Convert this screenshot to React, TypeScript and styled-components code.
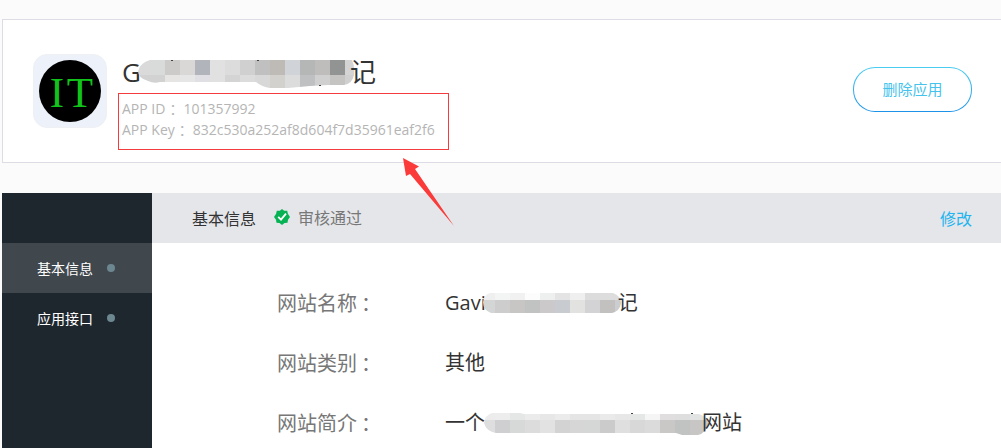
import React from "react";
import styled, { createGlobalStyle } from "styled-components";

const GlobalStyle = createGlobalStyle`
  * { box-sizing: border-box; }
  body {
    margin: 0;
    background: #fbfbfb;
    color: #333;
    font-family: "Open Sans", "Noto Sans CJK SC", sans-serif;
    font-size: 14px;
  }
`;

const Page = styled.div`
  min-height: 100vh;
  padding: 19px 0 0 2px;
  display: flex;
  flex-direction: column;
  gap: 30px;
  overflow: hidden;
`;

const AppCard = styled.header`
  position: relative;
  display: flex;
  align-items: flex-start;
  min-height: 144px;
  padding: 34px 29px 12px 30px;
  background: #fff;
  border: 1px solid #dcdde4;
  border-right: 0;
`;

const Avatar = styled.div`
  flex: none;
  width: 74px;
  height: 74px;
  border-radius: 14px;
  background: #edf2fa;
  border: 1px solid #eef0f4;
  svg { display: block; }
`;

const AppInfo = styled.div`
  flex: 1;
  min-width: 0;
  margin-left: 11px;
`;

const AppName = styled.h1`
  display: flex;
  align-items: center;
  margin: 0;
  padding: 0 0 2px 4px;
  height: 39px;
  font-size: 26px;
  line-height: 37px;
  font-weight: 400;
`;

const Mosaic = styled.svg<{ $before: number; $after: number; $top: number }>`
  flex: none;
  overflow: visible;
  margin: ${(p) => p.$top}px ${(p) => p.$after}px 0 ${(p) => p.$before}px;
`;

const Credentials = styled.dl`
  width: 331px;
  height: 57px;
  margin: 0;
  padding: 4px 3px;
  border: 1px solid #f43c3e;
  color: #b5b5b5;
  font-size: 14px;
  line-height: 21px;
  white-space: nowrap;
`;

const Credential = styled.div`
  display: flex;
  height: 21px;
  dt, dd { margin: 0; }
`;

const Colon = styled.span`
  padding-left: 4px;
  font-family: "Noto Sans CJK SC", sans-serif;
`;

const DeleteButton = styled.button`
  flex: none;
  width: 119px;
  height: 45px;
  margin-top: 13px;
  padding: 0 0 2px;
  border: 1px solid transparent;
  border-radius: 22px;
  background:
    linear-gradient(#fff, #fff) padding-box,
    linear-gradient(#4acdf0, #1c92e8) border-box;
  color: #45c3ec;
  font: inherit;
  font-size: 15px;
  cursor: pointer;
`;

const Arrow = styled.svg`
  position: absolute;
  left: 400px;
  top: 137px;
  z-index: 1;
`;

const Main = styled.div`
  flex: 1;
  display: flex;
`;

const Sidebar = styled.nav`
  flex: none;
  width: 150px;
  padding-top: 50px;
  background: #1f272e;
`;

const NavItem = styled.a<{ $active?: boolean }>`
  display: flex;
  align-items: center;
  gap: 14px;
  height: 50px;
  padding-left: 35px;
  background: ${(p) => (p.$active ? "#41484d" : "transparent")};
  color: #fff;
  text-decoration: none;

  &::after {
    content: "";
    width: 8px;
    height: 8px;
    border-radius: 50%;
    background: #6d8790;
  }
`;

const Panel = styled.main`
  flex: 1;
  min-width: 0;
  background: #fff;
`;

const PanelHeader = styled.div`
  display: flex;
  align-items: center;
  height: 50px;
  padding: 0 29px 0 40px;
  background: #e5e6ea;
  font-size: 16px;
`;

const PanelTitle = styled.h2`
  margin: 0;
  font-size: 16px;
  font-weight: 400;
`;

const Status = styled.span`
  display: flex;
  align-items: center;
  gap: 8px;
  margin-left: 18px;
  padding-bottom: 2px;
  color: #777;
`;

const EditLink = styled.a`
  margin-left: auto;
  color: #22b4ee;
  text-decoration: none;
`;

const Details = styled.dl`
  margin: 0;
  padding: 30px 0 0 125px;
  font-size: 20px;
  line-height: 60px;
`;

const Detail = styled.div`
  display: flex;
  height: 60px;
`;

const Term = styled.dt`
  width: 168px;
  color: #777;
`;

const Value = styled.dd`
  display: flex;
  align-items: center;
  margin: 0;
`;

type MosaicProps = {
  id: string;
  width: number;
  height: number;
  split: number;
  first: number;
  outline: string;
  top: string[];
  bottom: string[];
  specks?: [number, number][];
  before?: number;
  after?: number;
  drop?: number;
};

/* Two rows of 15px blocks, the first one cut to `first` pixels. */
const MosaicBar = ({ id, width, height, split, first, outline, top, bottom, specks = [], before = 0, after = 0, drop = 0 }: MosaicProps) => {
  const x = (i: number) => (i === 0 ? 0 : first + (i - 1) * 15);
  const w = (i: number) => (i === 0 ? first : 15);
  return (
    <Mosaic width={width} height={height} $before={before} $after={after} $top={drop} aria-hidden="true">
      <clipPath id={id}>
        <path d={outline} />
      </clipPath>
      <g clipPath={`url(#${id})`} shapeRendering="crispEdges">
        {top.map((c, i) => (
          <rect key={`t${i}`} x={x(i)} y={0} width={w(i)} height={split} fill={c} />
        ))}
        {bottom.map((c, i) => (
          <rect key={`b${i}`} x={x(i)} y={split} width={w(i)} height={height - split} fill={c} />
        ))}
      </g>
      {specks.map(([sx, sy]) => (
        <rect key={`${sx}-${sy}`} x={sx} y={sy} width={2} height={1} fill="#444" />
      ))}
    </Mosaic>
  );
};

export default function App() {
  return (
    <>
      <GlobalStyle />
      <Page>
        <AppCard>
          <Avatar>
            <svg width="72" height="72" viewBox="0 0 72 72">
              <circle cx="36" cy="36" r="31" fill="#000" />
              <g fill="#12c31c" fontFamily="Liberation Serif, serif" fontSize="43" textAnchor="middle">
                <text x="23" y="52">I</text>
                <text x="46" y="52">T</text>
              </g>
            </svg>
          </Avatar>
          <AppInfo>
            <AppName>
              G
              <MosaicBar
                id="name-mask"
                width={217}
                height={28}
                split={15}
                first={12}
                before={-3}
                after={-5}
                drop={3}
                outline="M12 0H214Q217 6 216 15Q214 24 206 25H190L172 26L150 28H132Q124 27 118 22H22Q16 24 10 21Q0 18 0 11Q2 3 12 0Z"
                top={["#dadada", "#d9dbda", "#cdcbca", "#d9d8d7", "#b1b4bb", "#e1e1e2", "#dcdcdd", "#d0d0d1", "#c0c0c0", "#bebbb6", "#d0d4d8", "#b5b7b7", "#bfbdbc", "#929493", "#d4d4d4"]}
                bottom={["#d2d2d2", "#d2d2d2", "#e6e5e4", "#e6e6e6", "#e0e0e4", "#e1e1e2", "#d4d4d4", "#dcdcdc", "#d8d8d8", "#d2d1cd", "#dcdcdc", "#bfc0c2", "#d0d0d0", "#c6c4c2", "#d0d0d0"]}
                specks={[[33, 0], [119, 0], [181, 25]]}
              />
              记
            </AppName>
            <Credentials>
              <Credential>
                <dt>APP ID<Colon>：</Colon></dt>
                <dd>101357992</dd>
              </Credential>
              <Credential>
                <dt>APP Key<Colon>：</Colon></dt>
                <dd>832c530a252af8d604f7d35961eaf2f6</dd>
              </Credential>
            </Credentials>
          </AppInfo>
          <DeleteButton type="button">删除应用</DeleteButton>
          <Arrow width="52" height="70" aria-hidden="true">
            <path d="M0 1L16 9.500L12 12L51 69L7 17L3 19Z" fill="#fb3b3a" />
          </Arrow>
        </AppCard>
        <Main>
          <Sidebar>
            <NavItem href="#info" $active>基本信息</NavItem>
            <NavItem href="#api">应用接口</NavItem>
          </Sidebar>
          <Panel>
            <PanelHeader>
              <PanelTitle>基本信息</PanelTitle>
              <Status>
                <svg width="16" height="16" viewBox="0 0 16 16" aria-hidden="true">
                  <path d="M8 0L10.200 1.700L13.200 1.700L13.900 4.700L16 8L14 10.800L13.500 13.700L10.500 14L8 16L5.500 14L2.500 13.700L2 10.800L0 8L2.100 4.700L2.800 1.700L5.800 1.700Z" fill="#07b255" />
                  <path d="M4.200 7.800L7 10.600L12 4.600" fill="none" stroke="#fff" strokeWidth="1.800" />
                </svg>
                审核通过
              </Status>
              <EditLink href="#edit">修改</EditLink>
            </PanelHeader>
            <Details>
              <Detail>
                <Term>网站名称<Colon>：</Colon></Term>
                <Value>
                  Gavi
                  <MosaicBar
                    id="site-mask"
                    width={138}
                    height={20}
                    split={7}
                    first={12}
                    before={-3}
                    after={-3}
                    outline="M7 0H130Q138 3 138 10Q137 18 129 20H8Q0 17 0 9Q1 2 7 0Z"
                    top={["#eeefee", "#f3f5f4", "#f1f1f1", "#fcfcfc", "#eeefef", "#e5e4e4", "#efefef", "#dcdcdd", "#dddddd", "#dddddd"]}
                    bottom={["#d4d6d5", "#cdcdcd", "#c8c6c5", "#c1c3c2", "#cbc9c9", "#c8ccd0", "#e2e2e1", "#d3d3d5", "#c3c1c0", "#cbcdd0"]}
                  />
                  记
                </Value>
              </Detail>
              <Detail>
                <Term>网站类别<Colon>：</Colon></Term>
                <Value>其他</Value>
              </Detail>
              <Detail>
                <Term>网站简介<Colon>：</Colon></Term>
                <Value>
                  一个
                  <MosaicBar
                    id="intro-mask"
                    width={224}
                    height={22}
                    split={7}
                    first={11}
                    before={-1}
                    after={-6}
                    drop={2}
                    outline="M8 0H36L40 1H215Q224 4 224 11Q222 20 214 22H198L192 20H12Q2 18 0 10Q1 2 8 0Z"
                    top={["#ececec", "#ededed", "#e5e7e6", "#ebebeb", "#e6e7e6", "#ebebeb", "#e5e5e6", "#e5e5e6", "#eaeaea", "#e7e7e8", "#e5e7e6", "#f5f5f5", "#e0dede", "#dededf", "#e2e3e3", "#d9d9d9"]}
                    bottom={["#dededf", "#cfcfd1", "#d7d9d8", "#dcdcdd", "#e2e2e2", "#d3d3d3", "#d6d6d7", "#d5d6d6", "#cbcbcc", "#dfdfdf", "#d8d8d8", "#dbdbdc", "#cac8c6", "#c1c3c2", "#c7c6c4", "#c4c4c3"]}
                    specks={[[147, 0], [207, 0]]}
                  />
                  网站
                </Value>
              </Detail>
            </Details>
          </Panel>
        </Main>
      </Page>
    </>
  );
}
